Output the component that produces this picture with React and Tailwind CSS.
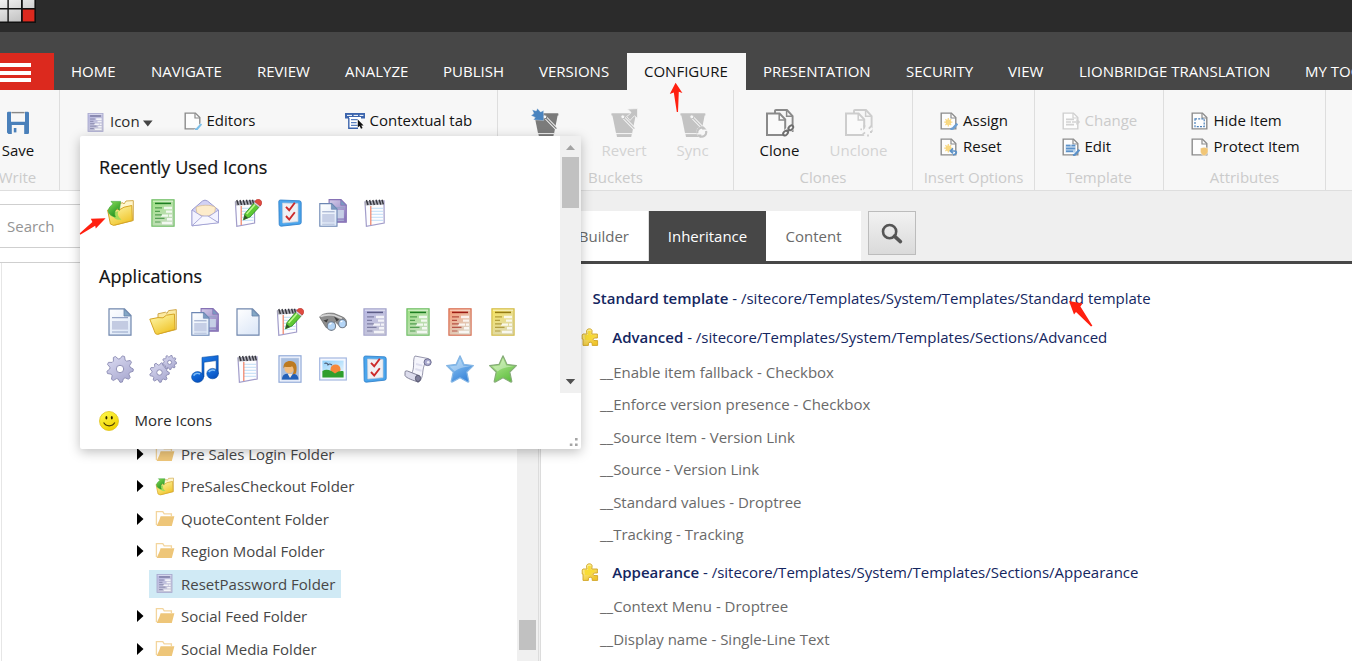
import React from "react";

/* ---------- gallery icons (28 x 28 grid) ---------- */

function Svg({ children, size = 28, box = "0 0 28 28", className = "" }) {
  return (
    <svg width={size} height={size} viewBox={box} className={"block shrink-0 " + className} fill="none">
      {children}
    </svg>
  );
}

function Gradients() {
  const list = [
    ["gYellow", "#fffbb4", "#f0c52c"],
    ["gGreen", "#8be05c", "#1f8f1c"],
    ["gBlue", "#a4d6f8", "#3b86da"],
    ["gLime", "#c8f2a4", "#63c044"],
    ["gLav", "#dcdcf2", "#acacd2"],
    ["gPaper", "#ffffff", "#dfe9f8"],
    ["gPurple", "#d6cdea", "#8c7bbd"],
    ["gNote", "#1d7be8", "#0650c0"],
    ["gSmile", "#fffb50", "#f0d200"],
    ["gFormP", "#b9b9e4", "#c6c6d8"],
    ["gFormG", "#9fe285", "#c6dcc0"],
    ["gFormR", "#f89a74", "#dcd6c8"],
    ["gFormY", "#f7e35c", "#dcd8b4"],
    ["gSky", "#8fd0fa", "#e9f6ff"],
    ["gLogo", "#f2f2f2", "#c2c2c2"],
  ];
  return (
    <svg width="0" height="0" className="absolute">
      <defs>
        {list.map(([id, a, b]) => (
          <linearGradient key={id} id={id} x1="0" y1="0" x2="0.6" y2="1">
            <stop offset="0" stopColor={a} />
            <stop offset="1" stopColor={b} />
          </linearGradient>
        ))}
      </defs>
    </svg>
  );
}

const OpenFolder = ({ size }) => (
  <Svg size={size}>
    <g strokeLinejoin="round">
      <path d="M9 5.8 16.5 4.2 18 5.4 19.6 2.6 27.3 1.6V21.5L9 26Z" fill="#fbe9a0" stroke="#d0a94e" />
      <path d="M.8 11.2 9 9.6 14 9.8 17.4 7.2 25.4 6 26 21.4 8.3 26.4 6.4 25.6Z" fill="url(#gYellow)" stroke="#d6a524" />
    </g>
  </Svg>
);

const FolderUp = ({ size }) => (
  <Svg size={size}>
    <g strokeLinejoin="round">
      <path d="M8 5 17 3.8 18 5 20 2 27.3 1.6V21.5L9 26Z" fill="#fff6cd" stroke="#d0ab52" />
      <path d="M1.6 11 14 10.5 18 8.2 25.8 6.5 26.4 21.6 7.6 26.4 4.4 25Z" fill="url(#gYellow)" stroke="#d6a524" />
      <path d="M6 14C7 19.5 11 21.6 15.4 20.6 12 18 11 15 12.4 12Z" fill="#a5dc58" />
      <path d="M5 2.4 14.6 2.4 13.4 11.4 11.2 9.4C8.6 11.6 8 14.4 9.4 18 5 17.4 1.8 14.6 2.4 10.8 3 8.4 5 6.4 7.2 5Z" fill="url(#gGreen)" stroke="#3aa338" strokeWidth=".6" />
    </g>
  </Svg>
);

const FORM_INK = { P: "#5c5c86", G: "#1d7d22", R: "#9c1c14", Y: "#957c14" };
const FORM_FILL = { P: "url(#gFormP)", G: "url(#gFormG)", R: "url(#gFormR)", Y: "url(#gFormY)" };
const FORM_EDGE = { P: "#a6a6cc", G: "#6cbc62", R: "#d66a4e", Y: "#d2bb46" };
const Form = ({ tone, size }) => (
  <Svg size={size}>
    <rect x="2.9" y=".8" width="22.2" height="26.4" fill={FORM_FILL[tone]} stroke={FORM_EDGE[tone]} strokeWidth="1.1" />
    <path d="M4 2.2H24" stroke="#fff" strokeOpacity=".6" />
    <path d="M6 4.4H22" stroke={FORM_INK[tone]} strokeWidth="1.5" />
    <path d="M15 9H23M17 12.6H23M12 16.6H19M20 16.6H23M18 20.2H23M13 24H23" stroke="#fff" strokeOpacity=".8" strokeWidth="2.4" />
    <path d="M6 8.9H13M6 12.3H11M6 15.8H13M6 19.4H15.5M6 23H11.5" stroke={FORM_INK[tone]} strokeWidth="1.2" strokeOpacity=".65" />
  </Svg>
);

const Mail = () => (
  <Svg>
    <path d="M1 11 11.5 2Q14 .2 16.5 2L27.5 11V23.5L1 26.8Z" fill="#d2d2f4" stroke="#9c9cd0" />
    <path d="M5 8.5C8 6 20 5 24.5 8.5L23.5 14.5 14.5 18 6 14.5Z" fill="#fdeccb" stroke="#d8bb8e" strokeWidth=".7" />
    <path d="M1 11 12 18 1 26.8ZM27.5 11 17 18 27.5 23.5Z" fill="#f2f2ff" stroke="#9c9cd0" strokeWidth=".8" />
    <path d="M1 26.8 11.5 17H17L27.5 23.8Z" fill="#f8f8ff" stroke="#9c9cd0" strokeWidth=".8" />
  </Svg>
);

const PadSheet = () => (
  <g>
    <path d="M4 3 23 2 23.2 24 5.4 27.3Z" fill="#fdfdff" stroke="#a29dca" strokeWidth="1.2" />
    <path d="M10 9.3H22M10 12.3H22M10 15.3H22M10 18.3H22M10 21.3H22" stroke="#b9daf5" strokeWidth=".9" />
    <path d="M9.8 7V26" stroke="#ef7f63" strokeWidth="1.2" />
    <path d="M3.6 2.3 22.5 1.2V5.6L4 6.4Z" fill="#a9a9b4" />
    <path d="M5.4 1 7 6M8.6 1 10.2 6M11.8 1 13.4 6M15 .8 16.6 5.6M18.2 .8 19.8 5.6M21 .8 22.4 5.4" stroke="#35353d" strokeWidth="1.4" />
  </g>
);

const NotePad = () => (
  <Svg><PadSheet /></Svg>
);

const PadPencil = () => (
  <Svg>
    <g transform="translate(-2.6 0)"><PadSheet /></g>
    <path d="M9.5 20.8 11 14.6 19.8 4.2 25 8.2 16 18Z" fill="#5ec934" stroke="#25871b" strokeWidth=".8" />
    <path d="M12.6 15 21.3 5.2" stroke="#c0f78e" strokeWidth="1.6" />
    <path d="M9.5 20.8 10.7 16 14 19Z" fill="#31552a" />
    <path d="M19.8 4.2 21.8 2 27 6 25 8.2Z" fill="#d9d9df" stroke="#98989c" strokeWidth=".5" />
    <path d="M20.8 2.8C21.8.2 24.5-.4 26.6 1.2 28.4 2.8 28 5.4 26.2 7Z" fill="#e04a40" stroke="#b32a24" strokeWidth=".6" />
  </Svg>
);

const Checklist = () => (
  <Svg>
    <path d="M4.5 1 23.5 1.8Q25.2 2 25.2 3.8V23.4Q25.2 25 23.6 25.2L5.2 27.2Q3.4 27.2 3.2 25.4L2.8 2.6Q2.8 1 4.5 1Z" fill="#4aa5ec" stroke="#2b7bc6" strokeWidth=".8" />
    <path d="M6.5 4 22 4.4V22.6L6.8 24Z" fill="#f0f0f3" stroke="#c7cfdb" strokeWidth=".7" />
    <path d="M10 7.8 13.2 11.2 18.8 3.8M10 17 13.2 20.6 18.8 13.2" stroke="#cc2a2a" strokeWidth="1.9" />
  </Svg>
);

const DocPath = ({ x = 0, y = 0, fill, edge, lines }) => (
  <g transform={"translate(" + x + " " + y + ")"}>
    <path d="M.6.6H12.5L17.8 6V23.2H.6Z" fill={fill} stroke={edge} strokeWidth="1.1" />
    {lines && (
      <>
        <path d="M3 8.8H15.4" stroke="#93a3c6" />
        <rect x="3" y="11" width="12.4" height="8.4" fill="#c6cfe6" />
        <path d="M3 21.2H15.4" stroke="#b1bdd8" />
      </>
    )}
    <path d="M12.2.8V6.3H17.6Z" fill="#7b9bc2" stroke={edge} strokeWidth=".7" />
  </g>
);

const Copies = () => (
  <Svg>
    <DocPath x="9.5" y="0" fill="url(#gPurple)" edge="#8672b5" lines />
    <DocPath x=".2" y="4" fill="url(#gPaper)" edge="#6c86b3" lines />
  </Svg>
);

const Page = ({ lines }) => (
  <Svg>
    <path d="M3 .8H18.5L25 7.5V27.2H3Z" fill="url(#gPaper)" stroke="#7087ad" strokeWidth="1.2" />
    {lines && (
      <>
        <path d="M6 9.6H22M6 24H22" stroke="#93a3c6" strokeWidth="1.1" />
        <rect x="6" y="13" width="16" height="8.6" fill="#c3cbe2" />
      </>
    )}
    <path d="M18 1.2V8H24.6Z" fill="#84a8c6" stroke="#6381a8" strokeWidth=".8" />
  </Svg>
);

const Binoculars = () => (
  <Svg>
    <path d="M.6 9C3 5.6 9 4.6 15 5.4L23.6 9C27 10.4 28.3 14 27.4 17.5L22 19.5 16 13.5 12 21 7 19.5Z" fill="#8d8d8d" stroke="#666" strokeWidth=".7" />
    <path d="M1.5 8.6C6 6 10 7 15 7.2L23 10.6" stroke="#d5d5d5" strokeWidth="1.6" />
    <path d="M4.4 12.4 9.4 11 7.6 14.6ZM15 8.6 20 11.6 17.6 13.6Z" fill="#3e3e3e" />
    <ellipse cx="12.4" cy="18" rx="4.2" ry="4.4" fill="#b4d5f6" stroke="#76808e" strokeWidth="1.1" />
    <ellipse cx="23.4" cy="15.6" rx="3.8" ry="4.2" fill="#b4d5f6" stroke="#76808e" strokeWidth="1.1" />
    <path d="M10.5 16.5 12.5 15M21.5 14 23.4 13" stroke="#fff" strokeWidth="1.4" />
  </Svg>
);

const Gear = ({ cx, cy, r }) => {
  const pts = [];
  for (let i = 0; i < 36; i++) {
    const a = (i / 36) * Math.PI * 2;
    const k = i % 4 < 2 ? r : r * 0.77;
    pts.push((cx + Math.cos(a) * k).toFixed(2) + "," + (cy + Math.sin(a) * k).toFixed(2));
  }
  return (
    <g>
      <polygon points={pts.join(" ")} fill="url(#gLav)" stroke="#8a8ab2" strokeWidth=".9" strokeLinejoin="round" />
      <circle cx={cx} cy={cy} r={r * 0.28} fill="#fff" stroke="#8f8fb6" strokeWidth="1" />
    </g>
  );
};

const OneGear = () => (
  <Svg><Gear cx={14} cy={14} r={13.3} /></Svg>
);
const TwoGears = () => (
  <Svg><Gear cx={10.5} cy={17.5} r={9.8} /><Gear cx={20.6} cy={7.4} r={7.2} /></Svg>
);

const Music = () => (
  <Svg>
    <path d="M11 2.4 27.2.6V19H25.2V5.6L13 7.2V22H11Z" fill="url(#gNote)" stroke="#0a4c9e" strokeWidth=".6" />
    <ellipse cx="6.6" cy="22" rx="6" ry="5.4" fill="url(#gNote)" stroke="#0a4c9e" strokeWidth=".6" />
    <ellipse cx="21.6" cy="18.6" rx="5.8" ry="5.2" fill="url(#gNote)" stroke="#0a4c9e" strokeWidth=".6" />
    <path d="M2.6 20.6C4 18.4 7 18 9 19M17.8 17C19 15 22 14.6 24 15.6" stroke="#7dbcf7" strokeWidth="1.6" />
  </Svg>
);

const Portrait = () => (
  <Svg>
    <rect x="3" y=".8" width="22" height="26.4" fill="#f4f7ff" stroke="#90a9d8" strokeWidth="1.2" />
    <rect x="5" y="3" width="18" height="22" fill="#a9bede" stroke="#c7d4ec" strokeWidth=".6" />
    <path d="M6 24.6C6 19.5 9.5 18.6 14 18.6S22.4 19.5 22.4 24.6Z" fill="#2360b8" />
    <path d="M11.5 18.6 14 23 17 18.6Z" fill="#f6e8da" />
    <circle cx="13.2" cy="13.6" r="4.8" fill="#f3bd7e" />
    <path d="M7.6 13.6C6.8 8.2 10.4 6 14 6 19.4 6 22 9.8 20 18.4L16.6 19.4C18.6 15.4 17.6 12.6 16 11.2 14 12.6 11 12 8.6 11.8Z" fill="#bd7a20" />
  </Svg>
);

const Picture = () => (
  <Svg>
    <rect x=".7" y="3" width="26.6" height="22" fill="#f4f7ff" stroke="#a3b7e0" strokeWidth="1.2" />
    <rect x="3.4" y="5.6" width="21.2" height="16.8" fill="url(#gSky)" />
    <circle cx="16.5" cy="14.4" r="5" fill="#f5883a" />
    <path d="M3.4 16C8 13.5 12 15.4 16 18.6 19 16.2 22 15.6 24.6 16.4V22.4H3.4Z" fill="#2f9e2c" />
    <path d="M5.4 8.4C7.4 7.6 8.6 8.6 9 9.8 10 8.6 11.4 8.8 13 10" stroke="#4c5a70" strokeWidth="1.1" />
  </Svg>
);

const Scroll = () => (
  <Svg>
    <path d="M11 1 24.4 3.6C20 7.4 19 14 18.6 19 18 23 16.4 26.6 13.8 27.2L3.6 21C8.6 20.4 9.6 14 9.6 9 9.6 5 9.8 2.6 11 1Z" fill="#f5f5fc" stroke="#8c8ca4" strokeWidth=".9" />
    <path d="M12 9 18.4 10.6M11.4 14 17.6 15.8" stroke="#dedeee" strokeWidth="2" />
    <ellipse cx="23.6" cy="7.2" rx="3.6" ry="3.4" fill="#a9a9ce" stroke="#68688a" strokeWidth=".9" />
    <circle cx="24.2" cy="7.2" r="1.3" fill="#eeeef8" />
    <path d="M1 17.6C.6 15.4 3 15.6 5 16.6L14.6 20.4V27C10 25.8 2 23 1 20.6Z" fill="#dcdcec" stroke="#77778f" strokeWidth=".9" />
    <ellipse cx="14" cy="23.4" rx="2.6" ry="3.2" fill="#80809c" stroke="#55556c" strokeWidth=".9" />
  </Svg>
);

const STAR = "M14 .8 18 9.4 27.4 10.6 20.8 17 22.8 26.4Q22.6 27.4 21.6 27L14 22.8 6.4 27Q5.4 27.4 5.2 26.4L7.2 17 .6 10.6 10 9.4Z";
const Star = ({ tone }) => (
  <Svg>
    <path d={STAR} fill={tone === "blue" ? "url(#gBlue)" : "url(#gLime)"} stroke={tone === "blue" ? "#86b6e4" : "#86ac78"} strokeWidth="1.2" strokeLinejoin="round" />
    <path d="M14 3.4 17.2 10.6 24.6 11.6C17 11.8 12 14 8.6 16.4L3.6 11.4 10.8 10.6Z" fill="#fff" fillOpacity=".35" />
  </Svg>
);

const Smiley = () => (
  <Svg size={20} box="0 0 20 20">
    <circle cx="10" cy="10" r="9.5" fill="url(#gSmile)" stroke="#e0c31c" strokeWidth=".8" />
    <ellipse cx="7.4" cy="6.8" rx="1" ry="1.8" fill="#2c2400" />
    <ellipse cx="12.8" cy="6.8" rx="1" ry="1.8" fill="#2c2400" />
    <path d="M4.6 11.6C7 16 13.4 16 15.8 11.6" stroke="#4b3b00" strokeWidth="1.1" />
  </Svg>
);

/* ---------- ribbon icons ---------- */

const SaveIcon = () => (
  <Svg size={24} box="0 0 24 24">
    <path d="M1 2Q1 .8 2.2 .8H5V10.8H19V.8H21.6Q23 .8 23 2V21.8Q23 23 21.8 23H18.2V14H5.8V23H2.4L1 21.6Z" fill="#4a80ba" />
    <path d="M5.4 1.6H18.6" stroke="#888" strokeWidth="1.4" />
    <rect x="7.8" y="17" width="2.6" height="4.4" fill="#4a80ba" />
  </Svg>
);

const SmallDoc = ({ kind, faded }) => {
  const c = faded ? "#cfcfcf" : "#8c8c8c";
  return (
    <Svg size={18} box="0 0 18 18" className="mt-0.5">
      <path d="M1.2 1.1H11.4L15.8 5.6V16.9H1.2Z" fill="#fdfdfd" stroke={c} strokeWidth="1.4" />
      <path d="M11 1.2V6H15.6" stroke={c} strokeWidth="1.2" />
      {kind === "editors" && (
        <g>
          <path d="M18 9.6V18H10Z" fill="#f7f7f7" />
          <path d="M17.4 12 13 17 11 17.6" stroke="#7cc0ea" strokeWidth="2" />
        </g>
      )}
      {(kind === "assign" || kind === "reset") && (
        <g>
          <circle cx="8.3" cy="10.2" r="2.6" fill="#f7cf63" />
          <path d="M8.3 6V14.4M4.2 10.2H12.4M5.4 7.3 11.2 13.1M11.2 7.3 5.4 13.1" stroke="#f9d984" strokeWidth="1.3" />
        </g>
      )}
      {kind === "assign" && <path d="M17.4 11.6 13 16.4 10.4 17.4" stroke="#6c9fd2" strokeWidth="2.4" />}
      {kind === "reset" && <path d="M10.4 13H14.4Q16.8 13.2 16.2 15.2 15.4 16.8 13 16.8M13 10.4 10.4 13 13 15.4" stroke="#5d92c8" strokeWidth="1.7" />}
      {kind === "change" && (
        <g stroke="#d2d2d2" strokeWidth="1.6">
          <path d="M4 7.4H12M4 10H9M4 12.6H12M10 10H17M14.4 7.6 17 10 14.4 12.4" />
        </g>
      )}
      {kind === "edit" && (
        <g>
          <rect x="3.6" y="6.6" width="10" height="8" fill="#b9d2ea" />
          <path d="M4 7.6H8.4M9.6 7.6H13.2M4 10.4H13.2M4 13.2H11" stroke="#5b91c9" strokeWidth="1.5" />
          <path d="M17.4 11.8 13 16.6 11 17.4" stroke="#5b91c9" strokeWidth="2.2" />
        </g>
      )}
      {kind === "hide" && <rect x="4" y="6.8" width="9.2" height="7.8" stroke="#4a80ba" strokeWidth="1.2" strokeDasharray="2 1.2" />}
      {kind === "protect" && <path d="M9.4 10.2 13 9.2 17 10.2V14Q16.4 16.8 13 18 9.8 16.8 9.4 14Z" fill="#f1c677" stroke="#f7f7f7" strokeWidth=".5" />}
    </Svg>
  );
};

const ContextTab = () => (
  <Svg size={20} box="0 0 20 20" className="mt-0.5">
    <path d="M.8 2.8H19.2V7H15.8V17.4H4V7H.8Z" fill="#fff" />
    <path d="M0 2H20V7.6H16V6H4V7.6H0Z" fill="#3c65ad" />
    <path d="M2 4.4H7M8.6 4.4H13M14.6 4.4H18.4" stroke="#fff" strokeWidth="1" />
    <path d="M3.8 7V17.2H13" stroke="#3c65ad" strokeWidth="1.4" />
    <path d="M6 8.6H12.6M6 11.6H11.6M6 14.4H12.6" stroke="#5a80bf" strokeWidth="1.3" />
    <path d="M12.8 8.4V16.6L14.6 15 16 17.8 17.6 17 16.2 14.4H18.6Z" fill="#111" />
  </Svg>
);

const Bucket = ({ kind }) => {
  const c = kind === "main" ? "#7b7b7b" : "#c3c3c3";
  return (
    <Svg size={30} box="0 0 30 30">
      <path d="M3 5.5H27L23 26H7.2Z" fill={c} />
      <path d="M2.2 5.5H27.4V7.4H2.6Z" fill={c} />
      <path d="M7.4 26H22.8L22.2 29H8Z" fill={c} />
      <path d="M7 25.6H23" stroke="#f7f7f7" />
      <path d="M13.6 8.6 25.4 20.6" stroke="#f7f7f7" strokeWidth="3" />
      <path d="M14 9 25.4 20.6" stroke={c} strokeWidth="1.3" />
      <circle cx="13.8" cy="8.8" r="2" fill="#f7f7f7" stroke={c} />
      {kind === "main" && (
        <path d="M1.2 1.8 5.2 3 6.4.6 9.6 4 12.6 2.6V12.6L2.4 11.8 4.4 9.4 0 7.4 3 5.6Z" fill="#4a84bf" stroke="#f7f7f7" strokeWidth=".3" />
      )}
      {kind === "revert" && <path d="M18.4 1 28.6.6V10.4L25.4 7.8C23.6 9.4 22.4 11 21 12.4L17.6 8.4C20 7 21.4 5.8 22 4.4Z" fill={c} stroke="#f7f7f7" strokeWidth=".8" />}
      {kind === "sync" && (
        <g>
          <circle cx="23.6" cy="24" r="5.4" fill="#f7f7f7" />
          <path d="M19.4 25.2A4.4 4.4 0 0 1 26 20.4M28 23A4.4 4.4 0 0 1 21.2 27.8" stroke={c} strokeWidth="2.2" />
          <path d="M24.6 17.8 28.6 21.6H24ZM22.4 30.2 18.6 26.4H23.4Z" fill={c} />
        </g>
      )}
    </Svg>
  );
};

const CloneIcon = ({ faded }) => {
  const c = faded ? "#cdcdcd" : "#8a8a8a";
  return (
    <Svg size={30} box="0 0 30 30">
      <path d="M10 5V2.6Q10 2 11 2H22L27.6 8V24" stroke={c} strokeWidth="1.9" />
      <path d="M21.6 2.2V8.2H27.4" stroke={c} strokeWidth="1.5" />
      <path d="M2 5.6H14.6L20.2 11.4V27H2Z" fill="#fafafa" stroke={c} strokeWidth="2" />
      <path d="M14.2 5.8V12H20" stroke={c} strokeWidth="1.5" />
      <path d="M19 26.4 27 18.6" stroke="#f7f7f7" strokeWidth="6" />
      {faded ? (
        <path d="M18.6 26.6 21 24.4M24.8 20.6 27.4 18M20.4 19V17M18 21.4H16.4M26 24H28M24 26.4V28.4" stroke={c} strokeWidth="1.8" />
      ) : (
        <g stroke="#6e6e6e" strokeWidth="1.9">
          <ellipse cx="20.6" cy="25" rx="2.8" ry="1.9" transform="rotate(-45 20.6 25)" />
          <ellipse cx="25.8" cy="19.8" rx="2.8" ry="1.9" transform="rotate(-45 25.8 19.8)" />
          <path d="M21.6 24 24.8 20.8" />
        </g>
      )}
    </Svg>
  );
};

const Puzzle = () => (
  <Svg size={18} box="0 0 18 18">
    <path d="M2 6H6L5.6 4C5.2 2 6.6.8 8.4.8S11.6 2 11 4L10.8 6H16.4V10H14Q12.2 10 12.2 11.4 12.2 12.6 14 12.6H16.6V17.4H11.2V15.8Q11 14.2 9.2 14.2 7.4 14.4 7.4 15.8V17.4H2V11H1.2V7Z" fill="url(#gYellow)" stroke="#cfa424" strokeWidth=".9" strokeLinejoin="round" />
    <path d="M3.6 8.2H13.6M8.4 3V8M4 10.6H10.4" stroke="#f9dc34" strokeWidth="2.6" />
  </Svg>
);

const TreeFolder = () => (
  <Svg size={20} box="0 0 20 20">
    <path d="M1.4 16V2.6H7.8L9.2 4.8H16.4V7" stroke="#f3d59d" strokeWidth="1.3" />
    <path d="M5.6 7.2H19.4L16.8 17H1.6L4.4 11Z" fill="#eec679" />
  </Svg>
);

const Magnifier = () => (
  <Svg size={22} box="0 0 22 22" className="mt-0.5">
    <circle cx="8.6" cy="8.6" r="6.6" stroke="#555" strokeWidth="2.6" />
    <path d="M13.4 13.2 19.4 18.6" stroke="#555" strokeWidth="3.6" strokeLinecap="round" />
  </Svg>
);

/* ---------- page pieces ---------- */

function Tab({ w, active, children }) {
  return (
    <div className={"flex h-[37px] shrink-0 items-center pb-0.5 pl-[17px] whitespace-nowrap " + w + (active ? " bg-[#f7f7f7] text-[#131313]" : " text-white")}>
      {children}
    </div>
  );
}

function Group({ w, label, children }) {
  return (
    <div className={"flex h-[100px] shrink-0 flex-col border-r border-[#dedede] " + w}>
      <div className="flex h-[77px] items-start">{children}</div>
      <div className="flex h-5 items-center justify-center whitespace-nowrap text-[#cbcbcb]">{label}</div>
    </div>
  );
}

function SmallButton({ icon, label, faded }) {
  return (
    <div className={"flex h-[26px] items-center gap-[5px] whitespace-nowrap " + (faded ? "text-[#cbcbcb]" : "")}>
      {icon}
      <span>{label}</span>
    </div>
  );
}

function BigButton({ icon, label, faded, w }) {
  return (
    <div className={"flex flex-col items-center pt-[18px] " + w + (faded ? " text-[#d3d3d3]" : "")}>
      {icon}
      <span className="mt-0.5 leading-5">{label}</span>
    </div>
  );
}

function Cell({ children }) {
  return <div className="flex w-[42.5px] shrink-0 justify-center">{children}</div>;
}

function Heading({ top, children }) {
  return (
    <div className={"h-6 text-[18px] leading-6 font-medium tracking-[0.06px] text-[#111] [-webkit-text-stroke:0.2px_#111] " + top}>
      {children}
    </div>
  );
}

const TREE = [
  ["Pre Sales Login Folder", "folder"],
  ["PreSalesCheckout Folder", "up"],
  ["QuoteContent Folder", "folder"],
  ["Region Modal Folder", "folder"],
  ["ResetPassword Folder", "form"],
  ["Social Feed Folder", "folder"],
  ["Social Media Folder", "folder"],
];

function TreeRow({ name, kind }) {
  const selected = kind === "form";
  return (
    <div className="flex h-[32.5px] items-center pl-[135.5px]">
      <div className="w-[13.5px]">
        {!selected && (
          <svg width="8" height="12" viewBox="0 0 8 12" className="block"><path d="M1 0 7.5 6 1 12Z" fill="#000" /></svg>
        )}
      </div>
      <div className={"flex h-7 items-center pr-1.5 pl-1.5 whitespace-nowrap " + (selected ? "bg-[#d0eaf5]" : "")}>
        <span className="flex w-[26px]">
          {kind === "folder" && <TreeFolder />}
          {kind === "up" && <FolderUp size={19} />}
          {kind === "form" && <Form tone="P" size={19} />}
        </span>
        {name}
      </div>
    </div>
  );
}

function Section({ name, path, h }) {
  return (
    <div className={"flex items-center whitespace-nowrap text-[#14265f] " + h}>
      <div className="w-[31.3px]"><Puzzle /></div>
      <span><span className="font-semibold">{name}</span> - {path}</span>
    </div>
  );
}

function Field({ children }) {
  return <div className="flex h-[32.5px] items-center pl-[19px] whitespace-nowrap text-[#6a6a6a]">{children}</div>;
}

function IconPopup() {
  return (
    <div className="absolute top-[136px] left-[80px] h-[313px] w-[501px] rounded-[2px] bg-white shadow-[0_3px_12px_rgba(0,0,0,0.25)]">
      <div className="flex h-[257px]">
        <div className="w-[480px] pl-[19px]">
          <Heading top="mt-[19px]">Recently Used Icons</Heading>
          <div className="mt-5 flex h-7">
            <Cell><FolderUp /></Cell>
            <Cell><Form tone="G" /></Cell>
            <Cell><Mail /></Cell>
            <Cell><PadPencil /></Cell>
            <Cell><Checklist /></Cell>
            <Cell><Copies /></Cell>
            <Cell><NotePad /></Cell>
          </div>
          <Heading top="mt-[37px]">Applications</Heading>
          <div className="mt-5 flex h-7">
            <Cell><Page lines /></Cell>
            <Cell><OpenFolder /></Cell>
            <Cell><Copies /></Cell>
            <Cell><Page /></Cell>
            <Cell><PadPencil /></Cell>
            <Cell><Binoculars /></Cell>
            <Cell><Form tone="P" /></Cell>
            <Cell><Form tone="G" /></Cell>
            <Cell><Form tone="R" /></Cell>
            <Cell><Form tone="Y" /></Cell>
          </div>
          <div className="mt-[19px] flex h-7">
            <Cell><OneGear /></Cell>
            <Cell><TwoGears /></Cell>
            <Cell><Music /></Cell>
            <Cell><NotePad /></Cell>
            <Cell><Portrait /></Cell>
            <Cell><Picture /></Cell>
            <Cell><Checklist /></Cell>
            <Cell><Scroll /></Cell>
            <Cell><Star tone="blue" /></Cell>
            <Cell><Star tone="green" /></Cell>
          </div>
        </div>
        <div className="flex w-[21px] flex-col items-center bg-[#f0f0f0]">
          <svg width="11" height="21" viewBox="0 0 11 21" className="block"><path d="M1 14H10L5.5 9Z" fill="#a3a3a3" /></svg>
          <div className="h-[51px] w-[17px] bg-[#c1c1c1]" />
          <svg width="11" height="21" viewBox="0 0 11 21" className="mt-auto block"><path d="M.8 7H10.2L5.5 12.2Z" fill="#505050" /></svg>
        </div>
      </div>
      <div className="flex h-[55px] items-center pl-[19px] text-[#2b2b2b]">
        <div className="mt-px w-[35.5px]"><Smiley /></div>
        <span className="-mt-px">More Icons</span>
      </div>
      <svg width="10" height="10" viewBox="0 0 10 10" className="absolute right-[2px] bottom-px">
        <path d="M6 0H8.6V2.6H6ZM6 5.4H8.6V8H6ZM.8 5.4H3.4V8H.8Z" fill="#a5a5a5" />
      </svg>
    </div>
  );
}

export default function App() {
  return (
    <div className="relative flex h-[661px] w-[1352px] flex-col overflow-hidden bg-white font-['Open_Sans',sans-serif] text-[15px] leading-5 text-[#131313]">
      <Gradients />

      <header className="h-8 shrink-0 bg-[#2b2b2b]">
        <svg width="36" height="23" viewBox="0 0 36 23" className="block">
          <path d="M0 0H36V23H0Z" fill="#111" />
          <path d="M0 0H7.4V8H0ZM8.8 0H21V8H8.8ZM22.8 0H34.4V8H22.8ZM0 9.6H7.4V21.4H0ZM8.8 9.6H21V21.4H8.8Z" fill="url(#gLogo)" />
          <path d="M22.8 9.6H34.4V21.4H22.8Z" fill="#dc291e" />
        </svg>
      </header>

      <nav className="flex h-[58px] shrink-0 items-end bg-[#474747]">
        <div className="-mb-px flex h-[38px] w-[54px] shrink-0 flex-col bg-[#dc291e] pt-[10px]">
          <div className="h-1 w-[31px] bg-white" />
          <div className="mt-1 h-1 w-[31px] bg-white" />
          <div className="mt-[3px] h-1 w-[31px] bg-white" />
        </div>
        <Tab w="w-[80px]">HOME</Tab>
        <Tab w="w-[106px]">NAVIGATE</Tab>
        <Tab w="w-[88px]">REVIEW</Tab>
        <Tab w="w-[98px]">ANALYZE</Tab>
        <Tab w="w-[96px]">PUBLISH</Tab>
        <Tab w="w-[105px]">VERSIONS</Tab>
        <Tab w="w-[119px]" active>CONFIGURE</Tab>
        <Tab w="w-[143px]">PRESENTATION</Tab>
        <Tab w="w-[102px]">SECURITY</Tab>
        <Tab w="w-[71px]">VIEW</Tab>
        <Tab w="w-[226px]">LIONBRIDGE TRANSLATION</Tab>
        <Tab w="w-[120px]">MY TOOLBAR</Tab>
      </nav>

      <section className="flex h-[101px] shrink-0 border-b border-[#dedede] bg-[#f7f7f7]">
        <Group w="w-[60px]" label={<span className="pr-6">Write</span>}>
          <div className="flex w-[36px] flex-col items-center pt-[21px]">
            <SaveIcon />
            <span className="mt-[5px] leading-5">Save</span>
          </div>
        </Group>
        <Group w="w-[438px]" label="">
          <div className="flex items-start pt-[17px] pl-[26px]">
            <div className="flex h-[28px] w-[97.5px] items-center whitespace-nowrap text-[#2b2b2b]">
              <span className="mt-[3px] w-[24px]"><Form tone="P" size={19} /></span>
              Icon
              <svg width="10" height="7" viewBox="0 0 10 7" className="mt-1 ml-[3px]"><path d="M0 .5H9.6L4.8 6.5Z" fill="#444" /></svg>
            </div>
            <div className="w-[161px]"><SmallButton icon={<SmallDoc kind="editors" />} label="Editors" /></div>
            <SmallButton icon={<ContextTab />} label="Contextual tab" />
          </div>
        </Group>
        <Group w="w-[236px]" label="Buckets">
          <BigButton w="w-[96px]" icon={<Bucket kind="main" />} label="" />
          <BigButton w="w-[60px]" icon={<Bucket kind="revert" />} label="Revert" faded />
          <BigButton w="w-[77px]" icon={<Bucket kind="sync" />} label="Sync" faded />
        </Group>
        <Group w="w-[179px]" label="Clones">
          <BigButton w="w-[91px]" icon={<CloneIcon />} label="Clone" />
          <BigButton w="w-[67px]" icon={<CloneIcon faded />} label="Unclone" faded />
        </Group>
        <Group w="w-[122px]" label="Insert Options">
          <div className="pt-[17px] pl-[27px]">
            <SmallButton icon={<SmallDoc kind="assign" />} label="Assign" />
            <SmallButton icon={<SmallDoc kind="reset" />} label="Reset" />
          </div>
        </Group>
        <Group w="w-[129px]" label="Template">
          <div className="pt-[17px] pl-[26.5px]">
            <SmallButton icon={<SmallDoc kind="change" faded />} label="Change" faded />
            <SmallButton icon={<SmallDoc kind="edit" />} label="Edit" />
          </div>
        </Group>
        <Group w="w-[162px]" label="Attributes">
          <div className="pt-[17px] pl-[26.5px]">
            <SmallButton icon={<SmallDoc kind="hide" />} label="Hide Item" />
            <SmallButton icon={<SmallDoc kind="protect" />} label="Protect Item" />
          </div>
        </Group>
      </section>

      <main className="flex min-h-0 flex-1">
        <aside className="flex w-[538px] shrink-0 flex-col">
          <div className="flex h-[72px] shrink-0 flex-col border-b border-[#cfcfcf] pt-[13px]">
            <div className="flex h-[44px] items-center border-y border-[#cfcfcf] pl-[7px] text-[#949494]">Search</div>
          </div>
          <div className="flex min-h-0 flex-1">
            <div className="-mr-px ml-px min-w-0 flex-1 overflow-hidden border-l border-[#e6e6e6] text-[#474747]">
              <div className="-ml-[2px] pt-[174.6px]">
                {TREE.map(([name, kind]) => <TreeRow key={name} name={name} kind={kind} />)}
              </div>
            </div>
            <div className="flex w-[21px] shrink-0 flex-col items-center bg-[#f0f0f0] pt-[357px]">
              <div className="h-[30px] w-[17px] bg-[#c1c1c1]" />
            </div>
          </div>
        </aside>
        <div className="w-[3px] shrink-0 border-x border-[#dcdcdc] bg-[#f0f0f0]" />
        <section className="flex min-w-0 flex-1 flex-col">
          <div className="flex h-[73px] shrink-0 items-end border-b-[3px] border-[#474747] bg-[#efefef]">
            <div className="flex h-[50px] w-[108px] items-center justify-end border-r border-[#dedede] bg-white pr-[19px] text-[#6a6a6a]">Builder</div>
            <div className="flex h-[50px] w-[117px] items-center justify-center bg-[#474747] text-white">Inheritance</div>
            <div className="flex h-[50px] w-[95px] items-center justify-center bg-white text-[#6a6a6a]">Content</div>
            <div className="mb-1.5 ml-[7px] flex h-[44px] w-[48px] items-center justify-center border border-[#bcbcbc] bg-linear-to-b from-[#f2f2f2] to-[#dadada]">
              <Magnifier />
            </div>
          </div>
          <div className="pl-[40px]">
            <div className="flex h-[54px] items-center pt-[14px] pl-[11.5px] whitespace-nowrap text-[#14265f]">
              <span><span className="font-semibold">Standard template</span> - /sitecore/Templates/System/Templates/Standard template</span>
            </div>
            <Section name="Advanced" path="/sitecore/Templates/System/Templates/Sections/Advanced" h="h-[37.7px]" />
            <Field>__Enable item fallback - Checkbox</Field>
            <Field>__Enforce version presence - Checkbox</Field>
            <Field>__Source Item - Version Link</Field>
            <Field>__Source - Version Link</Field>
            <Field>__Standard values - Droptree</Field>
            <Field>__Tracking - Tracking</Field>
            <Section name="Appearance" path="/sitecore/Templates/System/Templates/Sections/Appearance" h="h-[39.5px] pt-[3px]" />
            <Field>__Context Menu - Droptree</Field>
            <Field>__Display name - Single-Line Text</Field>
          </div>
        </section>
      </main>

      <IconPopup />

      <svg width="16" height="32" viewBox="0 0 16 32" className="absolute top-[82px] left-[669px]">
        <path d="M6.6 .8 13.4 11 9.8 9.8 9 30H7.8L4.8 10.6.8 12Z" fill="#ff2010" />
      </svg>
      <svg width="28" height="20" viewBox="0 0 28 20" className="absolute top-[217px] left-[79px]">
        <path d="M26.6 1.2 16.8 11.6 16.2 8.8 1.2 17.8.8 16.2 13.4 5 11.8 1.8Z" fill="#ff2010" />
      </svg>
      <svg width="26" height="28" viewBox="0 0 26 28" className="absolute top-[300px] left-[1068px]">
        <path d="M1 1 14.6 3.4 12.4 6.6 24.4 25.8 23 26.6 8 12 6 14.4Z" fill="#ff2010" />
      </svg>
    </div>
  );
}
